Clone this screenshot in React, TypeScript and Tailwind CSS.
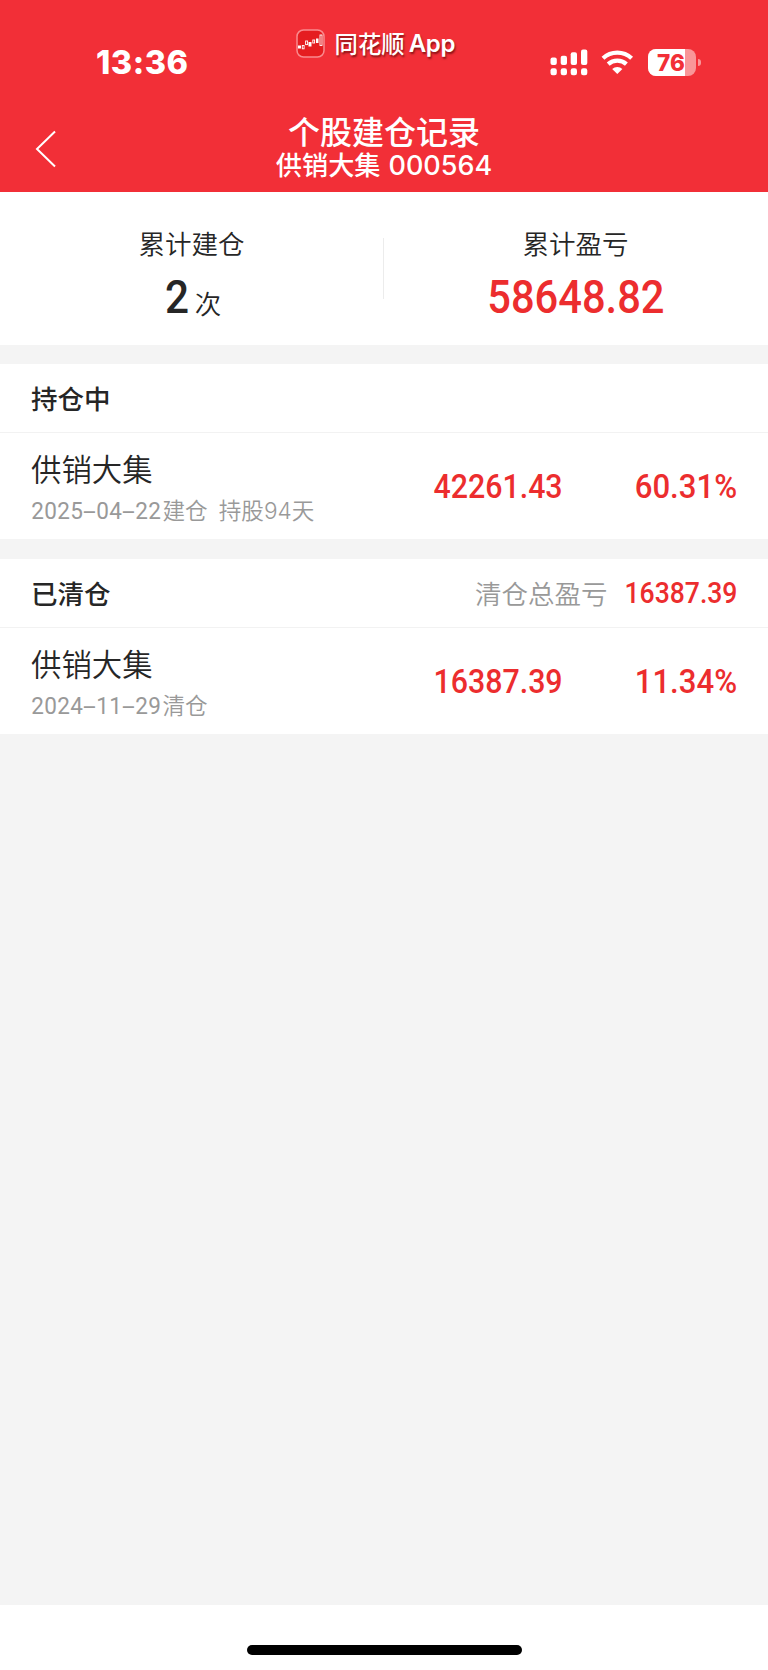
import type { ReactNode } from "react";

const cjk = "font-['Noto_Sans_CJK_SC',sans-serif]";

function StatusBar() {
  return (
    <div className="relative flex h-[100px] items-start justify-between pr-[67.5px] pl-[96px] text-white">
      <span className="mt-[43px] font-['Inter',sans-serif] text-[32.5px] leading-[40px] font-extrabold tracking-[0.5px]">13:36</span>
      <div className="absolute top-[29px] left-[296px] flex h-[29px] items-center">
        <svg width="29" height="29" viewBox="0 0 29 29" fill="none">
          <rect x="1" y="1" width="27" height="27" rx="6.5" fill="#e51d20" stroke="#f98b8e" strokeWidth="1.5" />
          <g fill="white">
            <rect x="2" y="16.5" width="3" height="3" />
            <rect x="12.5" y="13" width="3" height="4.5" />
            <rect x="20" y="9.5" width="2.5" height="4.5" />
          </g>
          <g stroke="white" strokeWidth="0.9">
            <rect x="6.3" y="16.5" width="1.8" height="3.3" />
            <rect x="9.6" y="12" width="2" height="3.6" />
            <rect x="16.8" y="11" width="1.8" height="3" />
            <rect x="24" y="6" width="2" height="10.5" />
          </g>
        </svg>
        <span className={`${cjk} ml-[9.5px] text-[23.4px] leading-[29px] font-medium [text-shadow:1px_2px_2px_rgba(70,0,0,0.6)]`}>同花顺</span>
        <span className="ml-[4px] font-['Inter',sans-serif] text-[24px] leading-[29px] font-semibold tracking-[-0.3px] [text-shadow:1px_2px_2px_rgba(70,0,0,0.6)]">App</span>
      </div>
      <div className="mt-[49px] flex items-start">
        <svg width="38" height="27" viewBox="0 0 38 27" fill="white" className="mr-[13px]">
          <rect x="0.5" y="8.5" width="6.3" height="7.5" rx="2" />
          <rect x="10.7" y="6.8" width="6.3" height="9.2" rx="2" />
          <rect x="20.7" y="3.3" width="6.3" height="12.7" rx="2" />
          <rect x="31" y="0.5" width="6.3" height="15.5" rx="2" />
          <rect x="0.5" y="19.3" width="6.3" height="6.9" rx="2.2" />
          <rect x="10.7" y="19.3" width="6.3" height="6.9" rx="2.2" />
          <rect x="20.7" y="19.3" width="6.3" height="6.9" rx="2.2" />
          <rect x="31" y="19.3" width="6.3" height="6.9" rx="2.2" />
        </svg>
        <svg width="34" height="27" viewBox="0 0 34 27" fill="none" className="mr-[13px]">
          <path d="M2 9.3a21 21 0 0 1 28.6 0" stroke="white" strokeWidth="4.2" />
          <path d="M7.2 15.1a13.4 13.4 0 0 1 18.2 0" stroke="white" strokeWidth="4.2" />
          <path d="M16.3 25 L11.2 20 a7.4 7.4 0 0 1 10.2 0Z" fill="white" />
        </svg>
        <div className="relative flex h-[27px] w-[48px] items-center justify-center overflow-hidden rounded-[8px] bg-[#f99698]">
          <div className="absolute inset-y-0 left-0 w-[37px] bg-white" />
          <span className="relative left-[-1px] font-['Inter',sans-serif] text-[22.5px] leading-[26px] font-extrabold text-[#f22f37]">76</span>
        </div>
        <div className="mt-[10px] ml-[2px] h-[7px] w-[2.5px] rounded-r-full bg-[#f99698]" />
      </div>
    </div>
  );
}

function Figure({ children, className }: { children: ReactNode; className: string }) {
  return (
    <span className={`inline-block font-['Roboto',sans-serif] font-medium whitespace-nowrap ${className}`}>{children}</span>
  );
}

function DateText({ value }: { value: string }) {
  return (
    <span className="flex font-['Roboto',sans-serif] text-[24.5px] leading-[32px] font-normal">
      {value.split("").map((c, i) => (
        <span key={i} className={`flex w-[13px] justify-center ${c === "-" ? "scale-x-[1.9]" : "scale-x-[0.92]"}`}>
          {c}
        </span>
      ))}
    </span>
  );
}

function Position({ date, action, extra, amount, rate }: { date: string; action: string; extra?: ReactNode; amount: string; rate: string }) {
  return (
    <div className="flex h-[107px] items-center border-t border-[#f2f2f2] px-[31px]">
      <div className="w-[330px] pt-[3px]">
        <div className="text-[30.4px] leading-[40px] font-[350] text-[#262626]">供销大集</div>
        <div className="mt-[6px] flex text-[22.6px] leading-[32px] font-[350] whitespace-nowrap text-[#999999]">
          <span className="pt-[1px]">
            <DateText value={date} />
          </span>
          <span className="ml-[1.5px]">{action}</span>
          {extra}
        </div>
      </div>
      <div className="w-[202px] pt-[2px] text-right text-[#ec2d2e]">
        <Figure className="origin-right scale-x-[0.905] text-[33.5px] leading-[40px]">{amount}</Figure>
      </div>
      <div className="flex-1 pt-[2px] text-right text-[#ec2d2e]">
        <Figure className="origin-right scale-x-[0.93] text-[33.5px] leading-[40px]">{rate}</Figure>
      </div>
    </div>
  );
}

export default function App() {
  return (
    <div className={`flex h-[1670px] w-[768px] flex-col overflow-hidden bg-[#f4f4f4] ${cjk}`}>
      <header className="h-[192px] bg-[#f22f37] text-white">
        <StatusBar />
        <div className="relative flex flex-col items-center pt-[11px]">
          <svg width="22" height="38" viewBox="0 0 22 38" fill="none" className="absolute top-[30px] left-[35px]">
            <path d="M20 1.5 L2 19 L20 36.5" stroke="white" strokeWidth="2" />
          </svg>
          <h1 className="text-[32px] leading-[38px] font-medium">个股建仓记录</h1>
          <div className="flex text-[26.2px] leading-[30px] font-medium">
            <span>供销大集</span>
            <span className="ml-[8px] pt-[2px] font-['Inter',sans-serif] text-[27px]">000564</span>
          </div>
        </div>
      </header>

      <section className="flex h-[153px] items-center bg-white text-[#262626]">
        <div className="flex flex-1 flex-col items-center pt-[9px]">
          <div className="text-[26.5px] leading-[36px] font-[350]">累计建仓</div>
          <div className="mt-[11px] flex h-[50px] items-center pl-[2px]">
            <Figure className="scale-x-[0.92] text-[46px] leading-[50px]">2</Figure>
            <span className="mt-[13px] ml-[5px] text-[26.5px] leading-[36px] font-[350]">次</span>
          </div>
        </div>
        <div className="h-[61px] w-px bg-[#ececec]" />
        <div className="flex flex-1 flex-col items-center pt-[9px] pr-[1px]">
          <div className="text-[26.5px] leading-[36px] font-[350]">累计盈亏</div>
          <Figure className="mt-[11px] scale-x-[0.905] text-[46px] leading-[50px] text-[#ec2d2e]">58648.82</Figure>
        </div>
      </section>

      <section className="mt-[19px] bg-white">
        <h2 className="flex h-[68px] items-center px-[31px] text-[26.5px] font-medium text-[#262626]">持仓中</h2>
        <Position
          date="2025-04-22"
          action="建仓"
          extra={
            <span className="ml-[11px]">
              持股<span className="font-['Inter',sans-serif] font-light">94</span>天
            </span>
          }
          amount="42261.43"
          rate="60.31%"
        />
      </section>

      <section className="mt-[20px] bg-white">
        <div className="flex h-[68px] items-center px-[31px] text-[26.5px]">
          <h2 className="flex-1 font-medium text-[#262626]">已清仓</h2>
          <span className="mr-[6px] font-[350] text-[#999999]">清仓总盈亏</span>
          <Figure className="origin-right scale-x-[0.915] pt-[2px] text-[29px] text-[#ec2d2e]">16387.39</Figure>
        </div>
        <Position date="2024-11-29" action="清仓" amount="16387.39" rate="11.34%" />
      </section>

      <footer className="mt-auto flex h-[65px] justify-center bg-white pt-[40px]">
        <div className="h-[10px] w-[275px] rounded-full bg-black" />
      </footer>
    </div>
  );
}
